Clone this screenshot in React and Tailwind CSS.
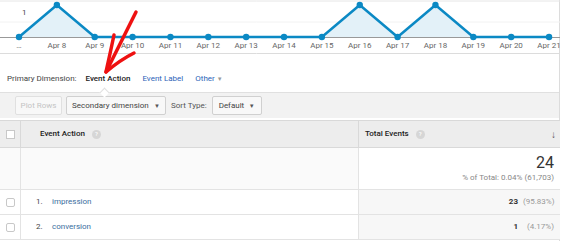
import React from 'react';

const blue = '#0b89c4';
const values = [0, 1, 0, 0, 0, 0, 0, 0, 0, 1, 0, 1, 0, 0, 0];
const labels = ['…', 'Apr 8', 'Apr 9', 'Apr 10', 'Apr 11', 'Apr 12', 'Apr 13', 'Apr 14', 'Apr 15', 'Apr 16', 'Apr 17', 'Apr 18', 'Apr 19', 'Apr 20', 'Apr 21'];

const Chart = () => {
    const pts = values.map((v, i) => [19 + i * 37.86, v ? 5 : 37]);
    const line = pts.map(p => p.join(',')).join(' ');
    const area = `19,37 ${line} ${pts[pts.length - 1][0]},37`;
    return (
        <svg width="560" height="54" className="block">
            <line x1="0" y1="1" x2="560" y2="1" stroke="#e6e6e6" />
            <line x1="0" y1="22" x2="560" y2="22" stroke="#f2f2f2" />
            <line x1="0" y1="37.5" x2="560" y2="37.5" stroke="#999" />
            <line x1="0" y1="53.5" x2="560" y2="53.5" stroke="#dcdcdc" />
            <text x="22" y="15" fontSize="8" fill="#444" fontFamily="Roboto, sans-serif">1</text>
            <polygon points={area} fill="#e3f1f8" />
            <polyline points={line} fill="none" stroke={blue} strokeWidth="2.5" strokeLinejoin="round" />
            {pts.map((p, i) => <circle key={i} cx={p[0]} cy={p[1]} r="3.2" fill={blue} />)}
            {labels.map((l, i) => (
                <text key={l} x={pts[i][0]} y="48" fontSize="8" fill="#666" textAnchor="middle" fontFamily="Roboto, sans-serif">{l}</text>
            ))}
        </svg>
    );
};

const Help = () => (
    <span className="inline-flex items-center justify-center w-[9px] h-[9px] rounded-full bg-[#d6d6d6] text-white text-[6px] leading-none ml-[7px]">?</span>
);

const Checkbox = ({ round }) => (
    <span className={`block w-[9px] h-[9px] border border-[#c8c8c8] bg-white ${round ? 'rounded-[2px] bg-[#f4f4f4]' : ''}`} />
);

const Btn = ({ children, className = '' }) => (
    <div className={`h-[19px] flex items-center border border-[#d0d0d0] rounded-[2px] bg-[#f8f8f8] text-[8px] text-[#444] ${className}`}>{children}</div>
);

const Caret = () => <span className="ml-auto text-[6px] text-[#555]">▼</span>;

const App = () => {
    return (
        <div className="relative w-[562px] h-[241px] bg-white overflow-hidden font-['Roboto','Liberation_Sans',sans-serif] text-[#333]">
            <div className="w-[560px] h-full border-r border-[#dcdcdc]">
                <Chart />

                {/* primary dimension */}
                <div className="h-[38px] flex items-end pb-[7px] pl-[7px] text-[8px]">
                    <span className="text-[#444]">Primary Dimension:</span>
                    <span className="ml-[9px] font-medium text-[#222] relative">
                        Event Action
                    </span>
                    <span className="ml-[12px] text-[#2d63b8]">Event Label</span>
                    <span className="ml-[12px] text-[#2d63b8]">Other <span className="text-[6px] text-[#999]">▼</span></span>
                </div>

                {/* toolbar */}
                <div className="relative h-[26px] bg-[#f2f2f2] border-t border-[#e0e0e0] flex items-center pl-[15px]">
                    <span className="absolute left-[101px] -top-[4px] w-[7px] h-[7px] rotate-45 bg-white border-l border-t border-[#e0e0e0]" />
                    <Btn className="w-[47px] justify-center text-[#c4c4c4] bg-[#efefef] border-[#e0e0e0]">Plot Rows</Btn>
                    <Btn className="w-[100px] ml-[4px] px-[5px]">Secondary dimension <Caret /></Btn>
                    <span className="ml-[5px] text-[8px] text-[#555]">Sort Type:</span>
                    <Btn className="w-[50px] ml-[5px] px-[6px]">Default <Caret /></Btn>
                </div>

                {/* table */}
                <div className="mt-[2px] grid grid-cols-[21px_337px_202px] text-[8px]">
                    <div className="h-[28px] bg-[#ededed] border-y border-r border-[#d9d9d9] flex items-center justify-center"><Checkbox /></div>
                    <div className="h-[28px] bg-[#ededed] border-y border-[#d9d9d9] flex items-center pl-[19px] font-medium text-[#222]">Event Action<Help /></div>
                    <div className="h-[28px] bg-[#ededed] border-y border-l border-[#d9d9d9] flex items-center pl-[6px] pr-[4px] font-medium text-[#222]">
                        Total Events<Help />
                        <span className="ml-auto text-[10px] text-[#555]">↓</span>
                    </div>

                    <div className="h-[42px] bg-[#fafafa] border-r border-b border-[#e3e3e3]" />
                    <div className="h-[42px] bg-[#fafafa] border-b border-[#e3e3e3]" />
                    <div className="h-[42px] bg-white border-b border-l border-[#e3e3e3] flex flex-col items-end justify-center pr-[6px] pt-[2px]">
                        <span className="text-[16px] leading-[16px] text-[#333]">24</span>
                        <span className="text-[8px] text-[#888] mt-[1px]">% of Total: 0.04% (61,703)</span>
                    </div>

                    {[['1.', 'impression', '23', '(95.83%)'], ['2.', 'conversion', '1', '(4.17%)']].map(r => (
                        <React.Fragment key={r[0]}>
                            <div className="h-[25px] border-r border-b border-[#e3e3e3] flex items-center justify-center"><Checkbox round /></div>
                            <div className="h-[25px] border-b border-[#e3e3e3] flex items-center pl-[15px]">
                                <span className="w-[16px] text-[#444]">{r[0]}</span>
                                <span className="text-[#3a6e9e]">{r[1]}</span>
                            </div>
                            <div className="h-[25px] bg-[#f7f7f7] border-b border-l border-[#e3e3e3] flex items-center justify-end pr-[6px]">
                                <span className="font-bold text-[#333]">{r[2]}</span>
                                <span className="ml-[5px] w-[31px] text-right text-[#999]">{r[3]}</span>
                            </div>
                        </React.Fragment>
                    ))}
                </div>
            </div>

            {/* hand-drawn annotation arrow */}
            <svg className="absolute left-0 top-0 pointer-events-none" width="562" height="241">
                <path d="M136 12 Q122 40 106 72" stroke="#ee1111" strokeWidth="3.5" fill="none" strokeLinecap="round" />
                <path d="M114 35 Q110 54 106 72 Q120 60 134 53" stroke="#ee1111" strokeWidth="3.5" fill="none" strokeLinecap="round" strokeLinejoin="round" />
            </svg>
        </div>
    );
};

export default App;
